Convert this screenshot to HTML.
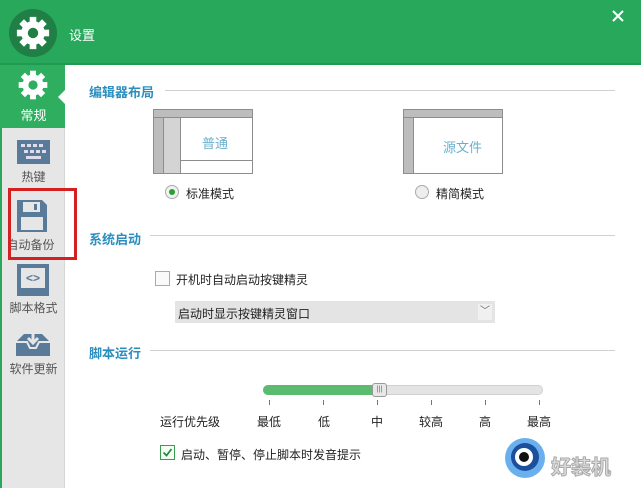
<!DOCTYPE html>
<html><head><meta charset="utf-8"><style>
*{margin:0;padding:0;box-sizing:border-box}
body{width:641px;height:488px;overflow:hidden;background:#fff;font-family:"Liberation Sans","Noto Sans CJK SC",sans-serif;font-size:12px;color:#222;position:relative}
.abs{position:absolute}
.hdr{left:0;top:0;width:641px;height:65px;background:#28a85b;border-bottom:2px solid #1f9a50}
.side{left:0;top:65px;width:65px;height:423px;background:#e6e6e6;border-left:2px solid #28a85b;border-right:1px solid #d6d6d6}
.sel{left:0;top:65px;width:65px;height:63px;background:#2fae60}
.lbl{width:65px;text-align:center;font-size:12px;color:#555}
.sec{color:#2a8fbf;font-weight:bold;font-size:13px}
.line{height:1px;background:#d0d0d0}
.box{width:100px;height:65px;border:1px solid #8d8d8d;background:#fff}
.t{font-size:12px;color:#222}
.tk{top:400px;width:1px;height:5px;background:#777}
</style></head><body>
<div class="abs hdr"></div>
<div class="abs" style="left:9px;top:9px;width:48px;height:48px;border-radius:50%;background:#1f7f45"></div>
<svg class="abs" style="left:15px;top:15px" width="36" height="36" viewBox="-19 -19 38 38"><g fill="#fff"><circle r="12.5"/><g id="t"><rect x="-3.5" y="-17" width="7" height="8"/></g><use href="#t" transform="rotate(45)"/><use href="#t" transform="rotate(90)"/><use href="#t" transform="rotate(135)"/><use href="#t" transform="rotate(180)"/><use href="#t" transform="rotate(225)"/><use href="#t" transform="rotate(270)"/><use href="#t" transform="rotate(315)"/></g><circle r="5.5" fill="#1f7f45"/></svg>
<div class="abs" style="left:69px;top:25px;color:#fff;font-size:13px">设置</div>
<svg class="abs" style="left:612px;top:10px" width="12" height="12"><path d="M1 1L11 11M11 1L1 11" stroke="#fff" stroke-width="2"/></svg>
<div class="abs side"></div>
<div class="abs sel"></div>
<div class="abs" style="left:58px;top:90px;width:0;height:0;border-top:7px solid transparent;border-bottom:7px solid transparent;border-right:7px solid #fff"></div>
<svg class="abs" style="left:17px;top:69px" width="32" height="32" viewBox="-19 -19 38 38"><g fill="#fff"><circle r="12.5"/><rect x="-3.5" y="-17" width="7" height="8"/><rect x="-3.5" y="-17" width="7" height="8" transform="rotate(45)"/><rect x="-3.5" y="-17" width="7" height="8" transform="rotate(90)"/><rect x="-3.5" y="-17" width="7" height="8" transform="rotate(135)"/><rect x="-3.5" y="-17" width="7" height="8" transform="rotate(180)"/><rect x="-3.5" y="-17" width="7" height="8" transform="rotate(225)"/><rect x="-3.5" y="-17" width="7" height="8" transform="rotate(270)"/><rect x="-3.5" y="-17" width="7" height="8" transform="rotate(315)"/></g><circle r="5.5" fill="#2fae60"/></svg>
<div class="abs lbl" style="left:1px;top:105px;color:#fff;font-size:13px">常规</div>
<svg class="abs" style="left:17px;top:140px" width="33" height="24"><rect width="33" height="24" fill="#5a7a99"/><g fill="#dde"><rect x="4" y="4" width="4" height="3"/><rect x="10" y="4" width="4" height="3"/><rect x="16" y="4" width="4" height="3"/><rect x="22" y="4" width="4" height="3"/><rect x="7" y="10" width="4" height="3"/><rect x="13" y="10" width="4" height="3"/><rect x="19" y="10" width="4" height="3"/><rect x="25" y="10" width="4" height="3"/><rect x="9" y="16" width="15" height="3"/></g></svg>
<div class="abs lbl" style="left:1px;top:168px">热键</div>
<svg class="abs" style="left:17px;top:200px" width="30" height="32"><path d="M0 0H25L30 5V32H0Z" fill="#5a7a99"/><rect x="6" y="2" width="17" height="10" fill="#e6e6e6"/><rect x="17" y="4" width="3" height="6" fill="#5a7a99"/><rect x="4" y="17" width="22" height="13" fill="#e6e6e6"/></svg>
<div class="abs lbl" style="left:-2px;top:236px">自动备份</div>
<div class="abs" style="left:8px;top:188px;width:69px;height:72px;border:3px solid #d42020"></div>
<div class="abs" style="left:17px;top:264px;width:32px;height:32px;background:#5a7a99;padding:4px"><div style="background:#e6e6e6;width:24px;height:20px;text-align:center;font-size:12px;font-weight:bold;color:#5a7a99;line-height:20px">&lt;&gt;</div></div>
<div class="abs lbl" style="left:1px;top:299px">脚本格式</div>
<svg class="abs" style="left:14px;top:330px" width="38" height="26"><path d="M2 12L10 4H28L36 12V26H2Z" fill="#5a7a99"/><path d="M2 12H13L16 18H22L25 12H36" stroke="#e6e6e6" stroke-width="2" fill="none"/><path d="M19 0V12M14 8L19 13L24 8" stroke="#e6e6e6" stroke-width="3" fill="none"/></svg>
<div class="abs lbl" style="left:1px;top:360px">软件更新</div>

<div class="abs sec" style="left:89px;top:82px">编辑器布局</div>
<div class="abs line" style="left:165px;top:90px;width:450px"></div>
<div class="abs box" style="left:153px;top:109px"><div class="abs" style="left:0;top:0;width:98px;height:8px;background:#bdbdbd;border-bottom:1px solid #8d8d8d"></div><div class="abs" style="left:0;top:8px;width:10px;height:55px;background:#bdbdbd;border-right:1px solid #8d8d8d"></div><div class="abs" style="left:10px;top:8px;width:17px;height:55px;background:#d4d4d4;border-right:1px solid #8d8d8d"></div><div class="abs" style="left:27px;top:50px;width:71px;height:1px;background:#8d8d8d"></div><div class="abs" style="left:48px;top:23px;color:#6ab0cc;font-size:13px">普通</div></div>
<div class="abs box" style="left:403px;top:109px"><div class="abs" style="left:0;top:0;width:98px;height:8px;background:#bdbdbd;border-bottom:1px solid #8d8d8d"></div><div class="abs" style="left:0;top:8px;width:10px;height:55px;background:#bdbdbd;border-right:1px solid #8d8d8d"></div><div class="abs" style="left:39px;top:27px;color:#6ab0cc;font-size:13px">源文件</div></div>
<div class="abs" style="left:165px;top:185px;width:14px;height:14px;border-radius:50%;border:1px solid #aaa;background:#f2f2f2"><div style="margin:3px;width:6px;height:6px;border-radius:50%;background:#2aa030"></div></div>
<div class="abs t" style="left:186px;top:185px">标准模式</div>
<div class="abs" style="left:415px;top:185px;width:14px;height:14px;border-radius:50%;border:1px solid #aaa;background:#eee"></div>
<div class="abs t" style="left:436px;top:185px">精简模式</div>

<div class="abs sec" style="left:89px;top:229px">系统启动</div>
<div class="abs line" style="left:150px;top:235px;width:465px"></div>
<div class="abs" style="left:155px;top:271px;width:15px;height:15px;border:1px solid #aaa;background:#fafafa"></div>
<div class="abs t" style="left:176px;top:271px">开机时自动启动按键精灵</div>
<div class="abs" style="left:175px;top:301px;width:320px;height:22px;background:#e4e4e4"><div class="abs t" style="left:3px;top:4px">启动时显示按键精灵窗口</div><div class="abs" style="right:3px;top:3px;width:14px;height:16px;background:#f0f0f0;color:#666;font-size:10px;text-align:center;line-height:16px">﹀</div></div>

<div class="abs sec" style="left:89px;top:343px">脚本运行</div>
<div class="abs line" style="left:150px;top:350px;width:465px"></div>
<div class="abs" style="left:263px;top:385px;width:280px;height:10px;border-radius:5px;background:#e4e4e4;border:1px solid #d0d0d0"></div>
<div class="abs" style="left:263px;top:385px;width:115px;height:10px;border-radius:5px;background:#5bbb6e"></div>
<div class="abs" style="left:372px;top:383px;width:15px;height:14px;border:1px solid #999;border-radius:3px;background:#e8e8e8;font-size:7px;text-align:center;line-height:12px;color:#666">|||</div>
<div class="abs tk" style="left:269px"></div><div class="abs tk" style="left:323px"></div><div class="abs tk" style="left:377px"></div><div class="abs tk" style="left:431px"></div><div class="abs tk" style="left:485px"></div><div class="abs tk" style="left:539px"></div>
<div class="abs" style="left:160px;top:413px">运行优先级</div>
<div class="abs t" style="left:257px;top:413px">最低</div>
<div class="abs t" style="left:318px;top:413px">低</div>
<div class="abs t" style="left:371px;top:413px">中</div>
<div class="abs t" style="left:419px;top:413px">较高</div>
<div class="abs t" style="left:479px;top:413px">高</div>
<div class="abs t" style="left:527px;top:413px">最高</div>
<svg class="abs" style="left:160px;top:445px" width="15" height="15"><rect x=".5" y=".5" width="14" height="14" fill="#f4fff4" stroke="#3a9a50"/><path d="M3.5 7.5L6.5 10.5L11.5 4" stroke="#2a8a40" stroke-width="1.8" fill="none"/></svg>
<div class="abs t" style="left:181px;top:446px">启动、暂停、停止脚本时发音提示</div>
<div class="abs" style="left:505px;top:438px;width:40px;height:40px;border-radius:50%;background:#6ab0ee"></div>
<div class="abs" style="left:511px;top:443px;width:28px;height:28px;border-radius:50%;background:#1c4f9c"></div>
<div class="abs" style="left:515px;top:448px;width:18px;height:18px;border-radius:50%;background:#fff"></div>
<div class="abs" style="left:519px;top:452px;width:10px;height:10px;border-radius:50%;background:#111"></div>
<div class="abs" style="left:551px;top:451px;font-size:20px;color:#ddd;font-weight:bold;-webkit-text-stroke:1px #aaa">好装机</div>
</body></html>
